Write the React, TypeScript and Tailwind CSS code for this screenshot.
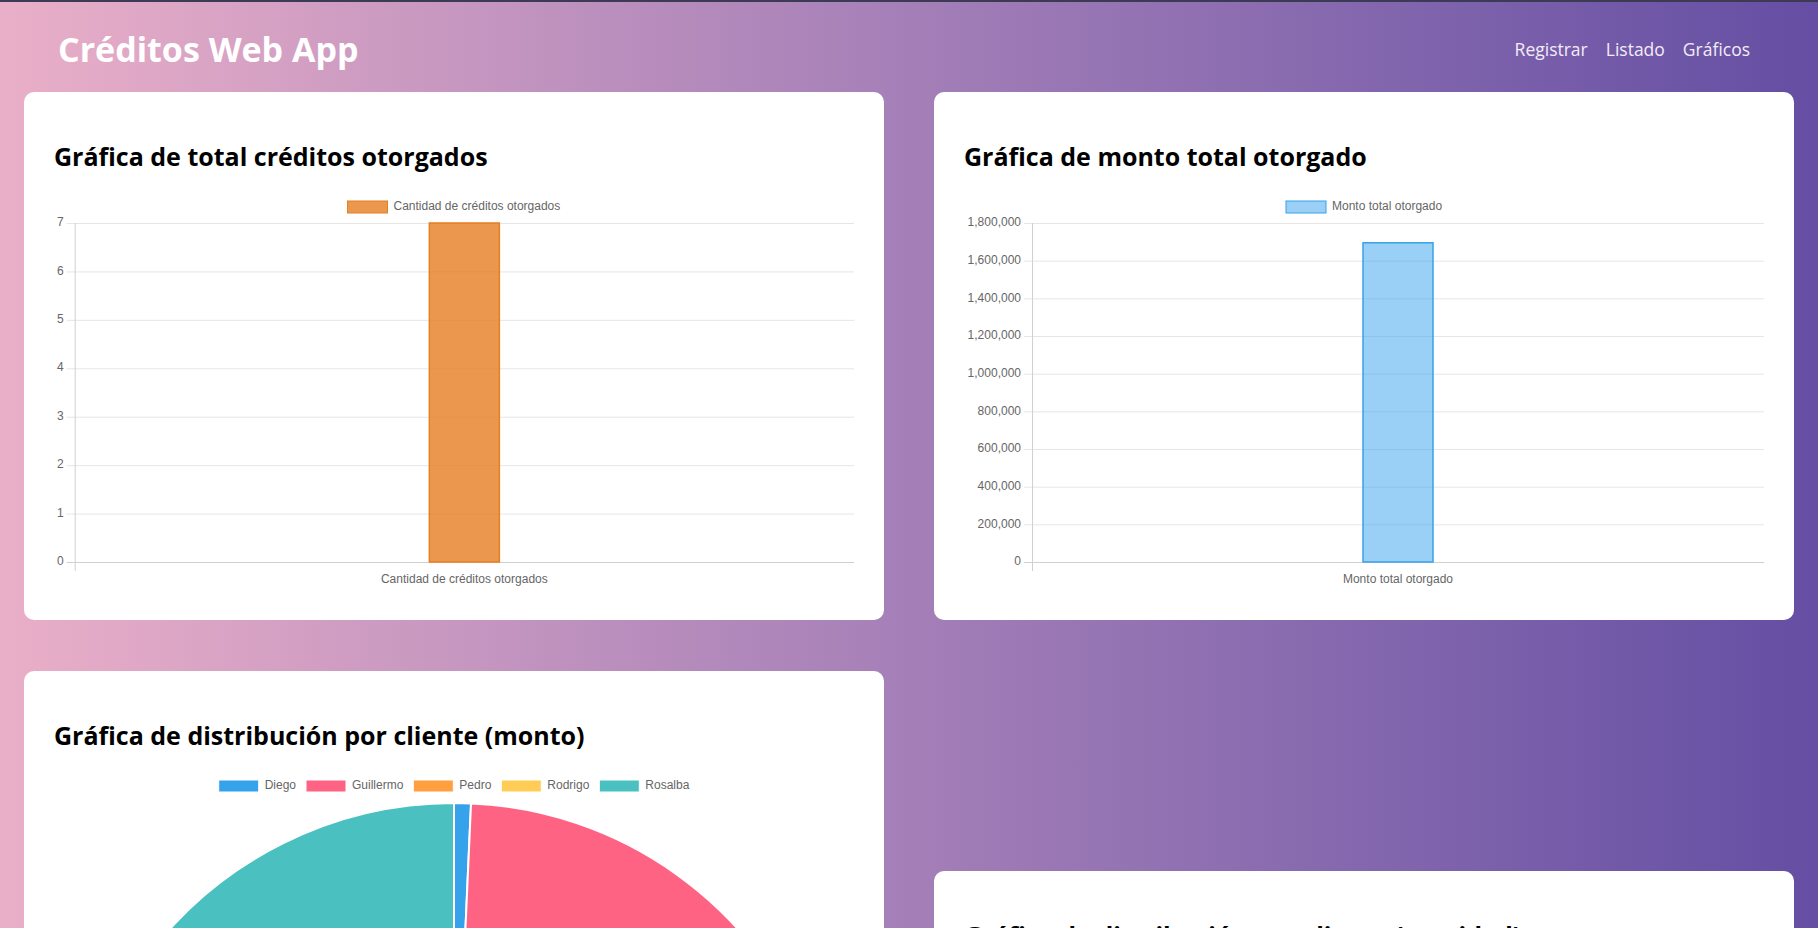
import React from "react";

const fmt = (n: number) => n.toLocaleString("en-US");

type BarChartProps = {
  label: string;
  value: number;
  max: number;
  step: number;
  axisX: number;
  fill: string;
  stroke: string;
  legendW: number;
};

// plot area: top 32, bottom 371, right 800 (same as a 800x400 chart.js canvas)
const TOP = 32;
const BOTTOM = 371;

const BarChart = ({ label, value, max, step, axisX, fill, stroke, legendW }: BarChartProps) => {
  const ticks: number[] = [];
  for (let v = 0; v <= max; v += step) ticks.push(v);
  const y = (v: number) => BOTTOM - (v / max) * (BOTTOM - TOP);
  const center = (axisX + 800) / 2;
  const legendX = 400 - (46 + legendW) / 2;
  return (
    <svg width="800" height="400" viewBox="0 0 800 400" className="block font-['Liberation_Sans',Arial,sans-serif] text-[12px]">
      <rect x={legendX} y={10} width={40} height={12} fill={fill} stroke={stroke} strokeWidth={1} />
      <text x={legendX + 46} y={16} dominantBaseline="middle" fill="#666">
        {label}
      </text>
      {ticks.map((t) => (
        <g key={t}>
          <line
            x1={axisX - 8}
            x2={800}
            y1={y(t) + 0.5}
            y2={y(t) + 0.5}
            stroke={t === 0 ? "#d0d0d0" : "#e6e6e6"}
            strokeWidth={1}
          />
          <text x={axisX - 11} y={y(t)} textAnchor="end" dominantBaseline="middle" fill="#666">
            {fmt(t)}
          </text>
        </g>
      ))}
      <line x1={axisX + 0.5} x2={axisX + 0.5} y1={TOP} y2={BOTTOM + 9} stroke="#d0d0d0" strokeWidth={1} />
      <rect
        x={center - 35}
        y={y(value)}
        width={70}
        height={BOTTOM - y(value)}
        fill={fill}
        stroke={stroke}
        strokeWidth={1.5}
      />
      <text x={center} y={389} textAnchor="middle" dominantBaseline="middle" fill="#666">
        {label}
      </text>
    </svg>
  );
};

const clients = [
  { name: "Diego", monto: 12000, cantidad: 1, color: "#36a2eb", w: 31.3 },
  { name: "Guillermo", monto: 620000, cantidad: 2, color: "#ff6384", w: 51.3 },
  { name: "Pedro", monto: 280000, cantidad: 1, color: "#ff9f40", w: 32 },
  { name: "Rodrigo", monto: 250000, cantidad: 1, color: "#ffcd56", w: 42 },
  { name: "Rosalba", monto: 533000, cantidad: 2, color: "#4bc0c0", w: 44 },
];

const Legend = () => {
  const total = clients.reduce((s, c) => s + 46 + c.w, 0) + (clients.length - 1) * 10;
  let x = 400 - total / 2;
  return (
    <g>
      {clients.map((c) => {
        const bx = x;
        x += 46 + c.w + 10;
        return (
          <g key={c.name}>
            <rect x={bx} y={10} width={40} height={12} fill={c.color} stroke="#fff" strokeWidth={1} />
            <text x={bx + 46} y={16} dominantBaseline="middle" fill="#666">
              {c.name}
            </text>
          </g>
        );
      })}
    </g>
  );
};

const PieChart = () => {
  const total = clients.reduce((s, c) => s + c.monto, 0);
  const cx = 400;
  const cy = 416;
  const r = 383;
  let a = -Math.PI / 2;
  return (
    <svg width="800" height="800" viewBox="0 0 800 800" className="block font-['Liberation_Sans',Arial,sans-serif] text-[12px]">
      <Legend />
      {clients.map((c) => {
        const a0 = a;
        const a1 = a + (c.monto / total) * Math.PI * 2;
        a = a1;
        const large = a1 - a0 > Math.PI ? 1 : 0;
        const d = `M ${cx} ${cy} L ${cx + r * Math.cos(a0)} ${cy + r * Math.sin(a0)} A ${r} ${r} 0 ${large} 1 ${cx + r * Math.cos(a1)} ${cy + r * Math.sin(a1)} Z`;
        return <path key={c.name} d={d} fill={c.color} stroke="#fff" strokeWidth={2} strokeLinejoin="round" />;
      })}
    </svg>
  );
};

const ClientBars = () => {
  const axisX = 20.7;
  const max = 2;
  const y = (v: number) => BOTTOM - (v / max) * (BOTTOM - TOP);
  const slot = (800 - axisX) / clients.length;
  return (
    <svg width="800" height="400" viewBox="0 0 800 400" className="block font-['Liberation_Sans',Arial,sans-serif] text-[12px]">
      <Legend />
      {[0, 0.5, 1, 1.5, 2].map((t) => (
        <g key={t}>
          <line x1={axisX - 8} x2={800} y1={y(t) + 0.5} y2={y(t) + 0.5} stroke={t === 0 ? "#d0d0d0" : "#e6e6e6"} />
          <text x={axisX - 11} y={y(t)} textAnchor="end" dominantBaseline="middle" fill="#666">
            {t}
          </text>
        </g>
      ))}
      <line x1={axisX + 0.5} x2={axisX + 0.5} y1={TOP} y2={BOTTOM + 9} stroke="#d0d0d0" />
      {clients.map((c, i) => {
        const mid = axisX + slot * (i + 0.5);
        return (
          <g key={c.name}>
            <rect x={mid - slot * 0.4} y={y(c.cantidad)} width={slot * 0.8} height={BOTTOM - y(c.cantidad)} fill={c.color} />
            <text x={mid} y={389} textAnchor="middle" dominantBaseline="middle" fill="#666">
              {c.name}
            </text>
          </g>
        );
      })}
    </svg>
  );
};

const Card = ({ title, children }: { title: string; children: React.ReactNode }) => (
  <div className="bg-white rounded-[10px] px-[30px] pt-[50px] pb-[29px]">
    <h2 className="text-[25px] leading-[29px] font-bold text-black mb-[20px]">{title}</h2>
    {children}
  </div>
);

export default function App() {
  return (
    <div className="min-h-screen border-t-2 border-[#3d3a55] bg-linear-to-r from-[#eaafc8] to-[#654ea3] font-['Open_Sans',sans-serif]">
      <header className="h-[90px] flex items-center justify-between pl-[58px] pr-[58px] pt-[4px]">
        <h1 className="text-[34px] font-bold text-white">Créditos Web App</h1>
        <nav className="flex text-[17.5px] text-[#f3ecf6]">
          <a href="#" className="px-[9px]">Registrar</a>
          <a href="#" className="px-[9px]">Listado</a>
          <a href="#" className="pl-[9px] pr-[10px]">Gráficos</a>
        </nav>
      </header>

      <main className="grid grid-cols-2 gap-x-[50px] gap-y-[51px] items-center px-6 pb-12">
        <Card title="Gráfica de total créditos otorgados">
          <BarChart
            label="Cantidad de créditos otorgados"
            value={7}
            max={7}
            step={1}
            axisX={20.7}
            fill="rgba(230,126,34,0.8)"
            stroke="#e67e22"
            legendW={167}
          />
        </Card>
        <Card title="Gráfica de monto total otorgado">
          <BarChart
            label="Monto total otorgado"
            value={1695000}
            max={1800000}
            step={200000}
            axisX={68}
            fill="rgba(54,162,235,0.5)"
            stroke="#36a2eb"
            legendW={110}
          />
        </Card>
        <Card title="Gráfica de distribución por cliente (monto)">
          <PieChart />
        </Card>
        <Card title="Gráfica de distribución por cliente (cantidad)">
          <ClientBars />
        </Card>
      </main>
    </div>
  );
}
